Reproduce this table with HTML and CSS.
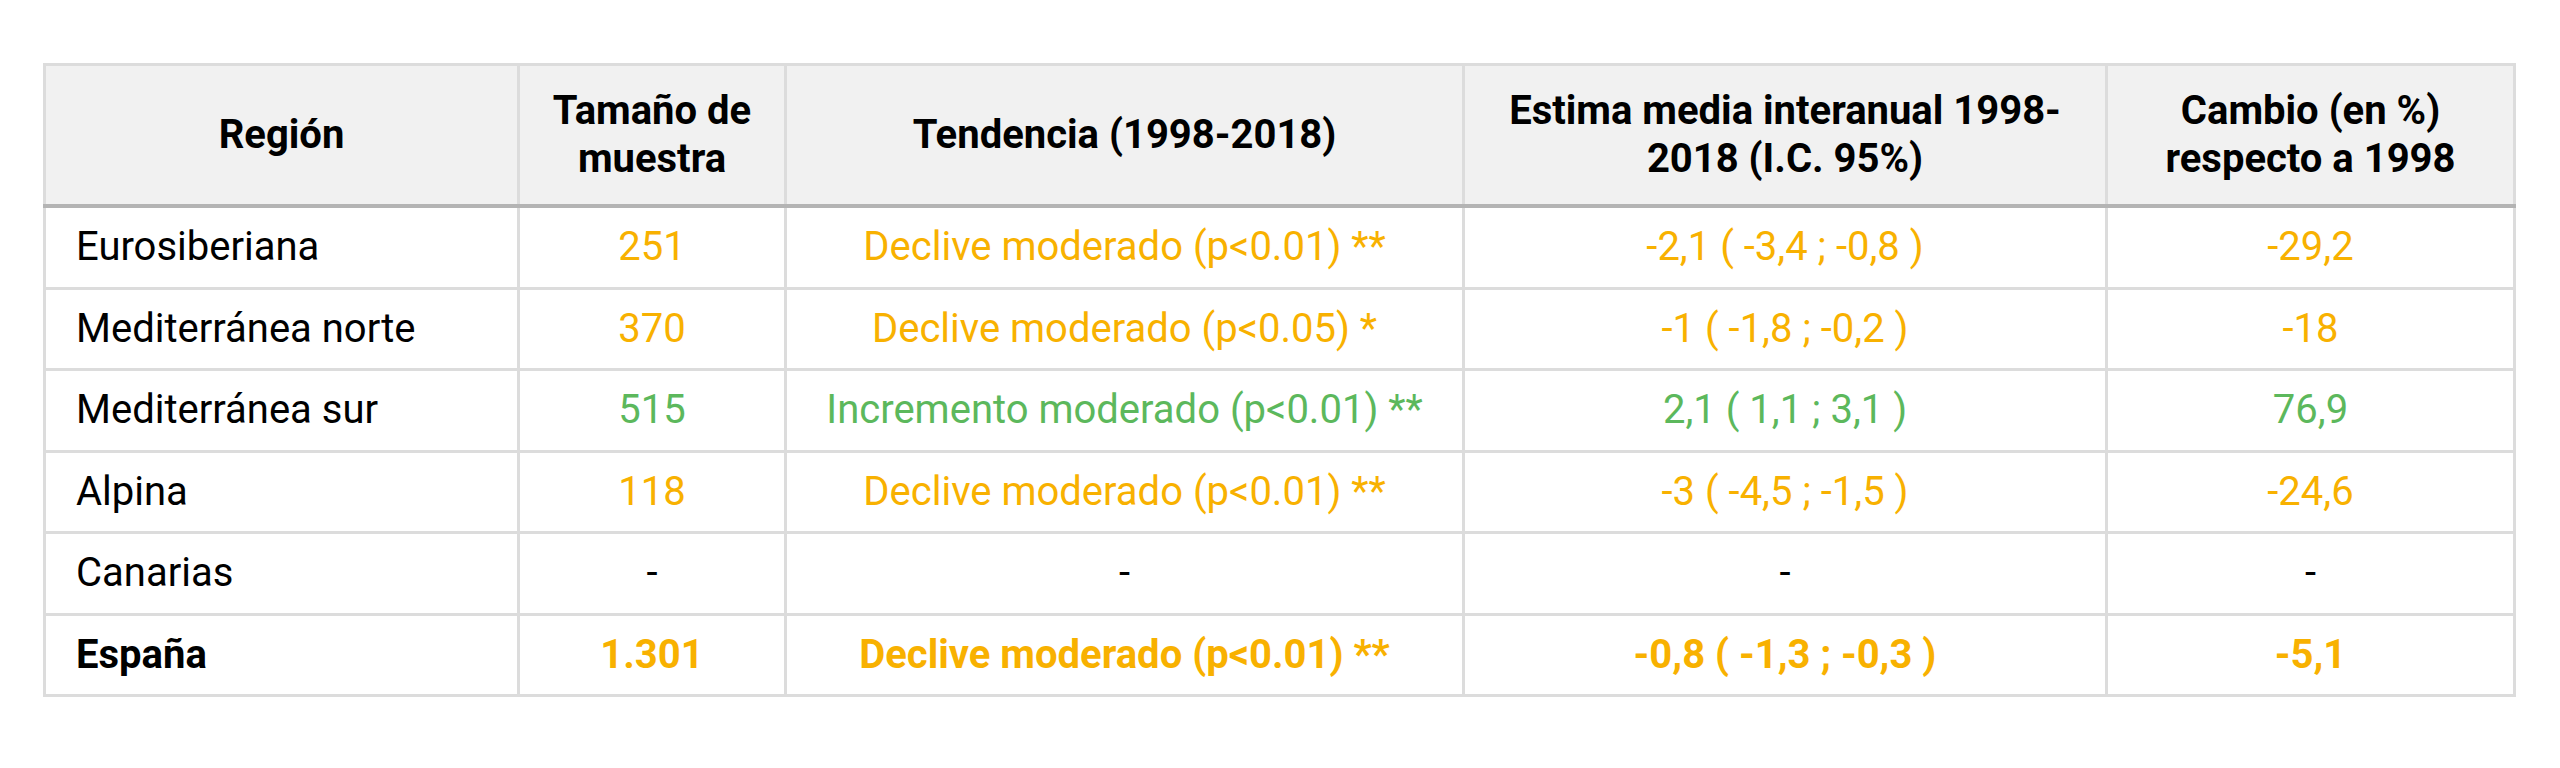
FILE: index.html
```html
<!DOCTYPE html>
<html lang="es">
<head>
<meta charset="utf-8">
<title>Tendencias por región</title>
<link rel="stylesheet" href="styles.css">
</head>
<body>
<table class="data">
  <colgroup>
    <col class="c-region">
    <col class="c-size">
    <col class="c-trend">
    <col class="c-est">
    <col class="c-change">
  </colgroup>
  <thead>
    <tr>
      <th>Región</th>
      <th>Tamaño de muestra</th>
      <th>Tendencia (1998-2018)</th>
      <th>Estima media interanual 1998-2018 (I.C. 95%)</th>
      <th>Cambio (en %) respecto a 1998</th>
    </tr>
  </thead>
  <tbody>
    <tr class="down">
      <td class="name">Eurosiberiana</td>
      <td>251</td>
      <td>Declive moderado (p&lt;0.01) **</td>
      <td>-2,1 ( -3,4 ; -0,8 )</td>
      <td>-29,2</td>
    </tr>
    <tr class="down">
      <td class="name">Mediterránea norte</td>
      <td>370</td>
      <td>Declive moderado (p&lt;0.05) *</td>
      <td>-1 ( -1,8 ; -0,2 )</td>
      <td>-18</td>
    </tr>
    <tr class="up">
      <td class="name">Mediterránea sur</td>
      <td>515</td>
      <td>Incremento moderado (p&lt;0.01) **</td>
      <td>2,1 ( 1,1 ; 3,1 )</td>
      <td>76,9</td>
    </tr>
    <tr class="down">
      <td class="name">Alpina</td>
      <td>118</td>
      <td>Declive moderado (p&lt;0.01) **</td>
      <td>-3 ( -4,5 ; -1,5 )</td>
      <td>-24,6</td>
    </tr>
    <tr class="none">
      <td class="name">Canarias</td>
      <td>-</td>
      <td>-</td>
      <td>-</td>
      <td>-</td>
    </tr>
    <tr class="down total">
      <td class="name">España</td>
      <td>1.301</td>
      <td>Declive moderado (p&lt;0.01) **</td>
      <td>-0,8 ( -1,3 ; -0,3 )</td>
      <td>-5,1</td>
    </tr>
  </tbody>
</table>
</body>
</html>
```

FILE: styles.css
```css
html, body {
  margin: 0;
  padding: 0;
  background: #ffffff;
}

body {
  font-family: Roboto, "Liberation Sans", Arial, sans-serif;
  font-size: 40px;
  color: #000000;
  padding: 63px 0 0 43px;
}

.data {
  border-collapse: collapse;
  table-layout: fixed;
  width: 2473px;
}

.c-region { width: 474px; }
.c-size { width: 267px; }
.c-trend { width: 678px; }
.c-est { width: 643px; }
.c-change { width: 408px; }

.data th,
.data td {
  border: 3px solid #dcdcdc;
  text-align: center;
  vertical-align: middle;
  padding: 0 24px;
}

.data th {
  background: #f1f1f1;
  font-weight: 700;
  line-height: 1.2;
  height: 138px;
  border-bottom: 4px solid #b4b4b4;
}

.data td {
  height: 78.5px;
  line-height: 1.2;
  font-weight: 400;
  white-space: nowrap;
}

.data td.name {
  text-align: left;
  padding-left: 30px;
  color: #000000;
}

.down td { color: #f8b100; }
.up td { color: #5cb85c; }
.none td { color: #000000; }

.total td { font-weight: 700; }
```
